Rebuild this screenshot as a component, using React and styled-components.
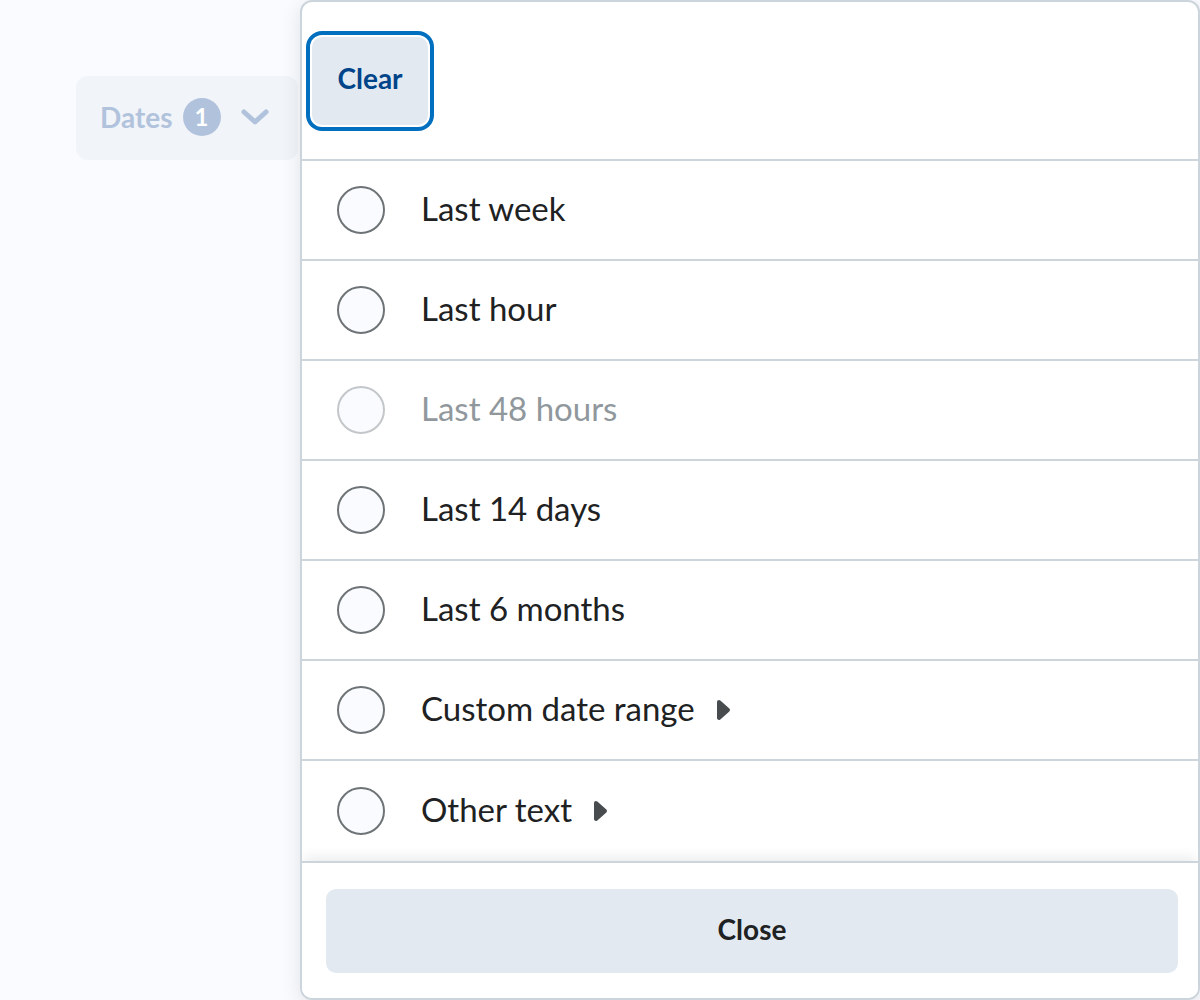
import styled, { createGlobalStyle } from "styled-components";

const GlobalStyle = createGlobalStyle`
  html, body {
    margin: 0;
    padding: 0;
    background: #f9fbff;
    font-family: Lato, "Noto Sans", sans-serif;
    color: #202122;
  }
`;

const Page = styled.div`
  width: 1200px;
  height: 1000px;
  padding: 76px;
  box-sizing: border-box;
  overflow: hidden;
`;

const FilterWrap = styled.div`
  position: relative;
  display: inline-block;
`;

const Opener = styled.button`
  display: flex;
  align-items: center;
  gap: 10px;
  height: 84px;
  width: 222px;
  padding: 0 24px 3px;
  box-sizing: border-box;
  border: none;
  border-radius: 12px;
  background: #f1f4f9;
  font-family: Lato, sans-serif;
  font-weight: 700;
  font-size: 28px;
  color: #b1c3dc;
`;

const Badge = styled.span`
  display: inline-flex;
  align-items: center;
  justify-content: center;
  width: 38px;
  height: 38px;
  border-radius: 50%;
  background: #b1c3dc;
  color: #ffffff;
  font-size: 24px;
  font-weight: 700;
`;

const Chevron = styled.svg`
  margin-left: 10px;
  flex: none;
`;

const Dropdown = styled.div`
  position: absolute;
  left: 224px;
  top: -76px;
  width: 900px;
  height: 1000px;
  box-sizing: border-box;
  display: flex;
  flex-direction: column;
  background: #ffffff;
  border: 2px solid #cdd5dc;
  border-radius: 12px;
  box-shadow: 0 4px 20px rgba(0, 0, 0, 0.1);
  overflow: hidden;
`;

const Header = styled.div`
  display: flex;
  align-items: center;
  height: 159px;
  padding: 0 10px;
  box-sizing: border-box;
  border-bottom: 2px solid #cdd5dc;
  flex: none;
`;

const Button = styled.button`
  display: flex;
  align-items: center;
  justify-content: center;
  height: ${(p) => (p.$wide ? "84px" : "88px")};
  min-width: ${(p) => (p.$wide ? "100%" : "116px")};
  padding: 0 24px 5px;
  box-sizing: border-box;
  border: none;
  border-radius: 10px;
  background: #e3e9f1;
  font-family: Lato, sans-serif;
  font-weight: 700;
  font-size: 28px;
  color: ${(p) => (p.$focused ? "#004489" : "#202122")};
  box-shadow: ${(p) =>
    p.$focused ? "0 0 0 2px #ffffff, 0 0 0 6px #006fbf" : "none"};
`;

const List = styled.div`
  flex: 1;
  display: flex;
  flex-direction: column;
`;

const Row = styled.label`
  display: flex;
  align-items: center;
  height: 100px;
  padding: 0 35px;
  box-sizing: border-box;
  border-bottom: 2px solid #cdd5dc;
  font-size: 33px;
  color: ${(p) => (p.$disabled ? "#90989d" : "#202122")};
  flex: none;

  &:last-child {
    border-bottom: none;
  }
`;

const Label = styled.span`
  padding-bottom: 4px;
`;

const Radio = styled.span`
  width: 48px;
  height: 48px;
  box-sizing: border-box;
  border-radius: 50%;
  border: 2px solid ${(p) => (p.$disabled ? "#c4c7c9" : "#6e7376")};
  background: #f9fbff;
  margin-right: 36px;
  flex: none;
`;

const Caret = styled.svg`
  margin-left: 21px;
  flex: none;
`;

const Footer = styled.div`
  position: relative;
  z-index: 1;
  flex: none;
  padding: 26px 20px 26px 24px;
  border-top: 2px solid #cdd5dc;
  box-shadow: 0 -6px 12px -2px rgba(0, 0, 0, 0.08);
  background: #ffffff;
`;

const options = [
  { label: "Last week" },
  { label: "Last hour" },
  { label: "Last 48 hours", disabled: true },
  { label: "Last 14 days" },
  { label: "Last 6 months" },
  { label: "Custom date range", more: true },
  { label: "Other text", more: true },
];

export default function App() {
  return (
    <>
      <GlobalStyle />
      <Page>
        <FilterWrap>
          <Opener>
            Dates
            <Badge>1</Badge>
            <Chevron width="28" height="16" viewBox="0 0 28 16">
              <path
                d="M3 3 L14 13 L25 3"
                fill="none"
                stroke="#b1c3dc"
                strokeWidth="5"
                strokeLinecap="round"
                strokeLinejoin="round"
              />
            </Chevron>
          </Opener>
          <Dropdown>
            <Header>
              <Button $focused>Clear</Button>
            </Header>
            <List>
              {options.map((o) => (
                <Row key={o.label} $disabled={o.disabled}>
                  <Radio $disabled={o.disabled} />
                  <Label>{o.label}</Label>
                  {o.more && (
                    <Caret width="15" height="22" viewBox="0 0 15 22">
                      <path
                        d="M3 3 L12 11 L3 19 Z"
                        fill="#494c4e"
                        stroke="#494c4e"
                        strokeWidth="4"
                        strokeLinejoin="round"
                      />
                    </Caret>
                  )}
                </Row>
              ))}
            </List>
            <Footer>
              <Button $wide>Close</Button>
            </Footer>
          </Dropdown>
        </FilterWrap>
      </Page>
    </>
  );
}
